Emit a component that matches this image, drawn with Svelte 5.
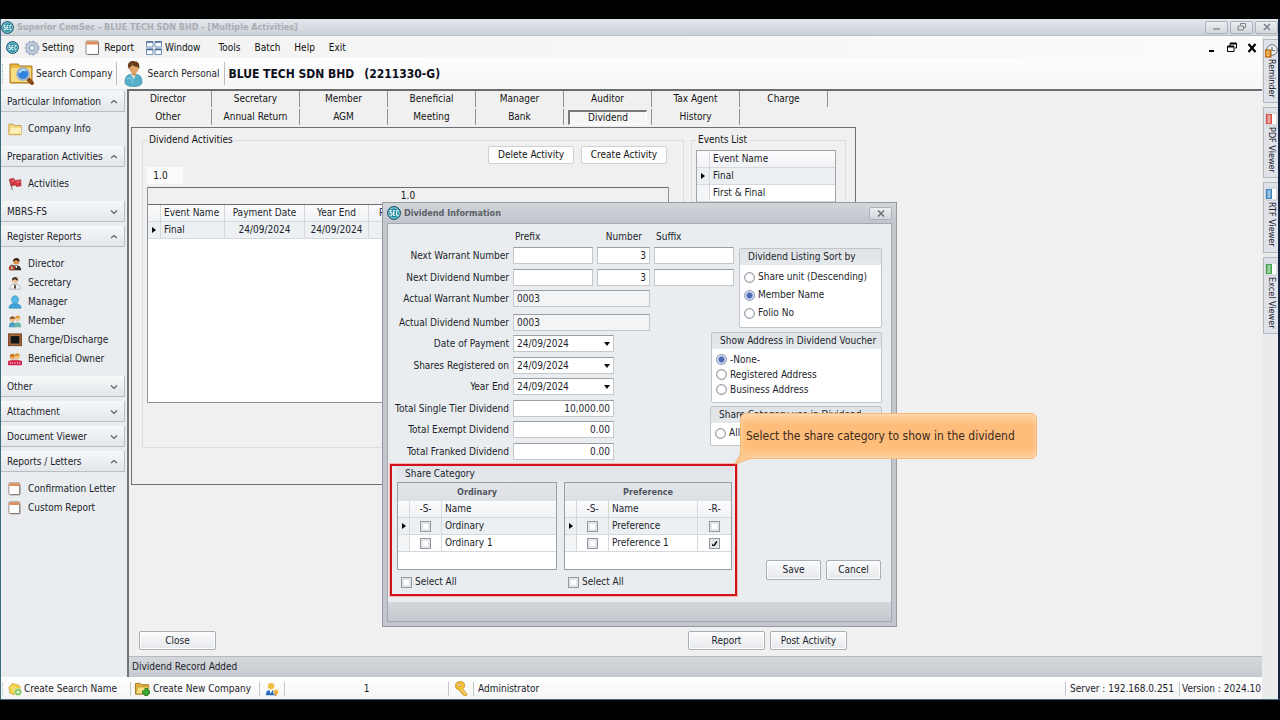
<script>
  const menus = ['Tools', 'Batch', 'Help', 'Exit'];

  const sections = [
    { title: 'Particular Infomation', open: true, items: [['Company Info', 'folder']] },
    { title: 'Preparation Activities', open: true, items: [['Activities', 'flag']] },
    { title: 'MBRS-FS', open: false, items: [] },
    {
      title: 'Register Reports',
      open: true,
      items: [
        ['Director', 'director'],
        ['Secretary', 'secretary'],
        ['Manager', 'manager'],
        ['Member', 'member'],
        ['Charge/Discharge', 'charge'],
        ['Beneficial Owner', 'owner']
      ]
    },
    { title: 'Other', open: false, items: [] },
    { title: 'Attachment', open: false, items: [] },
    { title: 'Document Viewer', open: false, items: [] },
    {
      title: 'Reports / Letters',
      open: true,
      items: [
        ['Confirmation Letter', 'report'],
        ['Custom Report', 'report']
      ]
    }
  ];

  const tabs = [
    ['Director', 'Secretary', 'Member', 'Beneficial', 'Manager', 'Auditor', 'Tax Agent', 'Charge'],
    ['Other', 'Annual Return', 'AGM', 'Meeting', 'Bank', 'Dividend', 'History']
  ];

  const rail = [
    ['Reminder', 'clock'],
    ['PDF Viewer', '#d9534a'],
    ['RTF Viewer', '#3f86c4'],
    ['Excel Viewer', '#45a84c']
  ];

  const dates = [
    ['Date of Payment', 'payment'],
    ['Shares Registered on', 'registered'],
    ['Year End', 'yearend']
  ];
  const totals = [
    ['Total Single Tier Dividend', '10,000.00', 'single'],
    ['Total Exempt Dividend', '0.00', 'exempt'],
    ['Total Franked Dividend', '0.00', 'franked']
  ];

  let sortBy = $state('Member Name');
  let address = $state('-None-');
  let restricted = $state([false, true]);
</script>

{#snippet logo(size)}
  <svg width={size} height={size} viewBox="0 0 14 14" aria-hidden="true">
    <circle cx="7" cy="7" r="6.4" fill="#1c8ca0" stroke="#174f66" />
    <circle cx="7" cy="7" r="5.2" fill="none" stroke="#bfe6ec" stroke-width=".8" />
    <path d="M5 4.6H3.4v2.2H5v2.4H3M8.3 4.6H6.4v4.8h1.9M6.4 7h1.6M11.2 4.8H9.6v4.5h1.6" fill="none" stroke="#fff" stroke-width="1" />
  </svg>
{/snippet}

{#snippet icon(name, size)}
  <svg width={size} height={size} viewBox="0 0 16 16" aria-hidden="true">
    {#if name === 'folder'}
      <path d="M1 2.500h5l1.500 1.500H15v10.500H1z" fill="#f3d680" stroke="#c79b3f" />
      <path d="M1.500 14 3.500 6.500h11.500v7.500z" fill="#fdf0b8" />
      <path d="M1.500 14h13" stroke="#d7a94a" />
    {:else if name === 'flag'}
      <path d="M2 3l3 12" stroke="#8b8f96" stroke-width="1.500" />
      <path d="M1.500 2.500l5-1L8 4l6.500-1 .5 7-5 1-2-2-4.500 1.500z" fill="#d33a42" stroke="#9b2730" stroke-width=".6" />
      <path d="M4 4.500l3-.5M10 6l3-.6" stroke="#f4a3a5" />
    {:else if name === 'director'}
      <path d="M4 15c0-4 2-5.500 5-5.500s6 1.500 6 5.500z" fill="#33302f" />
      <circle cx="9.500" cy="5" r="3.500" fill="#d8924c" />
      <path d="M5.500 5c-.2-4 6-5.500 7.500-2l.2 2c-2 0-3-1-4-1.500-1 1-2 1-3.700 1.500z" fill="#3a2317" />
      <path d="M8 10l1.500 3L11 10z" fill="#fff" />
      <rect x="1" y="10.500" width="7" height="4.500" rx="1" fill="#a8432a" /><path d="M3 10.500v-1h3v1" stroke="#6f2718" fill="none" />
      <circle cx="4.500" cy="12.700" r="1" fill="#fff" />
    {:else if name === 'secretary'}
      <path d="M2 15c0-4 2.500-5.500 6-5.500s6 1.500 6 5.500z" fill="#f5f6f8" stroke="#8e939b" stroke-width=".7" />
      <circle cx="8" cy="5" r="3.400" fill="#edc19b" />
      <path d="M4.500 5c-.4-5 7-5.500 7 0-2 0-3-.8-3.500-1.500C7 4.500 6 5 4.500 5z" fill="#4a3324" />
      <path d="M7.300 10h1.400l.6 3.500L8 15l-1.300-1.500z" fill="#55483f" />
    {:else if name === 'manager'}
      <path d="M1 15c0-3 2-4.600 5-5V8.500h4V10c3 .4 5 2 5 5z" fill="#3da2d6" stroke="#247aa8" stroke-width=".6" />
      <path d="M4 5c0-5.500 8-5.500 8 0 0 2.800-1.700 5.300-4 5.300S4 7.800 4 5z" fill="#55b8e6" stroke="#2b86b5" stroke-width=".6" />
    {:else if name === 'member'}
      <path d="M1 15c0-4 1.500-5.500 4-5.500S9 11 9 15z" fill="#4a9ec2" />
      <circle cx="5" cy="6" r="3" fill="#efc08b" /><path d="M2 6c0-4.500 6-4.500 6-.5-2 0-3-.7-6 .5z" fill="#8b5326" />
      <path d="M7 15c0-4 1.500-5.500 4-5.500s4 1.500 4 5.500z" fill="#69b6ab" />
      <circle cx="11" cy="5" r="3" fill="#f3ca93" /><path d="M8 5c0-4.500 6-4.500 6 0-2-1-3-1-6 0z" fill="#dd9b35" />
    {:else if name === 'charge'}
      <rect x=".5" y="1" width="15" height="13.500" fill="#a5673a" stroke="#6d4023" />
      <rect x="3" y="3.500" width="10" height="8.500" fill="#14181b" />
    {:else if name === 'owner'}
      <circle cx="5" cy="5.500" r="3" fill="#e7a860" /><path d="M2 5c0-4 6-4 6 0z" fill="#c4701f" />
      <circle cx="10.500" cy="5" r="3" fill="#f2c184" /><path d="M7.500 4.500c0-4 6-4 6 0z" fill="#e09a33" />
      <path d="M1 11c0-3 14-3 14 0z" fill="#d9574d" />
      <rect x="0" y="10" width="16" height="5" rx="1" fill="#d3214f" />
      <path d="M2.500 11.500v2M5 11.500v2M8 11.500v2M11 11.500v2M13.500 11.500v2" stroke="#ffd6e0" />
    {:else if name === 'report'}
      <rect x="1" y="1" width="12.500" height="13.500" rx="1.200" fill="#fdfdfd" stroke="#93857b" />
      <rect x="1.500" y="1.500" width="11.500" height="3" fill="#e08b57" />
      <path d="M13.500 4v10.500H3" stroke="#7b7069" fill="none" />
    {:else if name === 'gear'}
      <circle cx="8" cy="8" r="6" fill="#c3cee1" stroke="#96a4bd" stroke-width="1" />
      <circle cx="8" cy="8" r="6.800" fill="none" stroke="#a5b2c9" stroke-width="1.300" stroke-dasharray="2.500 1.500" />
      <circle cx="8" cy="8" r="2.700" fill="#f4f6fa" stroke="#8494b2" />
    {:else if name === 'windows'}
      <path d="M.5 1.500h6.500v5.500H.5zM9 1.500h6.500v5.500H9zM.5 9h6.500v5.500H.5zM9 9h6.500v5.500H9z" fill="#fafcff" stroke="#6d8fb8" />
      <path d="M.5 2h6.500M9 2h6.500M.5 9.500h6.500M9 9.500h6.500" stroke="#46699a" stroke-width="1.500" />
    {:else if name === 'searchname'}
      <path d="M1 6l4-4.500 3 1L13 4l1 3-1 5-6 2.500-5-2z" fill="#f2cf45" stroke="#c99b24" stroke-width=".7" />
      <path d="M3 7l4-3M4 9l5-3.500M5 11l4-3" stroke="#fff2a6" />
      <circle cx="11.500" cy="11.500" r="4" fill="#62bd3f" stroke="#d9f0cc" /><path d="M11.500 9.300v4.400M9.300 11.500h4.400" stroke="#fff" stroke-width="1.500" />
    {:else if name === 'newcompany'}
      <path d="M.5 2.500h5L7 4h7.500v10H.5z" fill="#e0ae3c" stroke="#a2761f" />
      <path d="M1 13.500 3 6.500h12l-1.500 7z" fill="#f8df84" stroke="#b98e2f" stroke-width=".6" />
      <path d="M10.500 8h3v2.500H16v3h-2.500V16h-3v-2.500H8v-3h2.500z" fill="#3faf34" stroke="#1d6f1b" stroke-width=".8" />
    {:else if name === 'user'}
      <path d="M1 15c0-4.500 2-6 5-6s6 1.500 6 6z" fill="#2a6dc0" />
      <path d="M5 9l1.500 4L8.500 9z" fill="#fff" />
      <circle cx="7" cy="4.700" r="3.700" fill="#f0bd45" />
      <circle cx="12.500" cy="11.500" r="2.800" fill="#f1a634" stroke="#fbe2a9" /><path d="M12.500 13v3" stroke="#d08a26" stroke-width="1.500" />
    {:else if name === 'key'}
      <path d="M1.500 5c0-6 10-6 10-.5 0 2-1 3-2 3.800l4.500 6-1 1.500h-2.500L10 14l-1.500-.2L8 12l-1.500-.5L6 9.500C3.500 9.500 1.500 8 1.500 5z" fill="#f3bf35" stroke="#b9831b" stroke-width=".7" />
      <circle cx="5.500" cy="4" r="1.500" fill="#fff7d0" stroke="#a97818" stroke-width=".6" />
      <path d="M8.500 8.500l3.500 5.500" stroke="#fce58a" />
    {/if}
  </svg>
{/snippet}

{#snippet gridTable(kind, title)}
  <table class="grid cat">
    <caption>{title}</caption>
    <thead>
      <tr>
        <th></th><th class="mid">-S-</th><th>Name</th>
        {#if kind === 'Preference'}<th class="mid">-R-</th>{/if}
      </tr>
    </thead>
    <tbody>
      {#each [kind, `${kind} 1`] as name, i}
        <tr class:current={i === 0}>
          <td class="mark">{#if i === 0}<i class="ptr"></i>{/if}</td>
          <td class="mid"><input type="checkbox" aria-label={name} /></td>
          <td>{name}</td>
          {#if kind === 'Preference'}
            <td class="mid"><input type="checkbox" aria-label={name} bind:checked={restricted[i]} /></td>
          {/if}
        </tr>
      {/each}
    </tbody>
  </table>
{/snippet}

<div class="screen">
  <div class="window">
    <header class="titlebar">
      {@render logo(13)}
      <h1>Superior ComSec - BLUE TECH SDN BHD - [Multiple Activities]</h1>
      <div class="wbtns">
        <button aria-label="Minimize"><svg width="10" height="8" viewBox="0 0 10 8"><path d="M1 6h7" stroke="#8a8f98" stroke-width="1.500" /></svg></button>
        <button aria-label="Restore"><svg width="10" height="8" viewBox="0 0 10 8"><path d="M3.500 2.500v-2h5v4h-2M1 3h5.500v4H1z" fill="none" stroke="#7d828b" /></svg></button>
        <button aria-label="Close window"><svg width="10" height="8" viewBox="0 0 10 8"><path d="M2 1l6 6M8 1L2 7" stroke="#7d828b" stroke-width="1.600" /></svg></button>
      </div>
    </header>

    <div class="frame">
      <div class="column">
        <nav class="menubar">
          {@render logo(13)}
          <button class="m1">{@render icon('gear', 16)}Setting</button>
          <button class="m2">{@render icon('report', 16)}Report</button>
          <button class="m3">{@render icon('windows', 16)}Window</button>
          {#each menus as m}<button>{m}</button>{/each}
          <div class="mdi">
            <button aria-label="Minimize document"><svg width="12" height="12" viewBox="0 0 12 12"><path d="M3 9h5" stroke="#000" stroke-width="2" /></svg></button>
            <button aria-label="Restore document"><svg width="12" height="12" viewBox="0 0 12 12"><path d="M4 4V1.500h6.500V6H9M1.500 4.500H8v5H1.500z" fill="none" stroke="#000" /><path d="M4 1.500h6.500M1.500 4.500H8" stroke="#000" stroke-width="2" /></svg></button>
            <button aria-label="Close document"><svg width="12" height="12" viewBox="0 0 12 12"><path d="M2.500 2l7 8M9.500 2l-7 8" stroke="#000" stroke-width="2.200" /></svg></button>
          </div>
        </nav>

        <div class="toolbar">
          <i class="grip"></i>
          <button class="company">
            <svg width="26" height="24" viewBox="0 0 26 24" aria-hidden="true">
              <path d="M1 2h8l2 2h12v17H1z" fill="#e9b640" stroke="#a97b25" />
              <path d="M2 6h20v14.500H2z" fill="#f9dd83" />
              <path d="M2 20.500h20" stroke="#b88629" />
              <path d="M18 16l5 5" stroke="#8b4c1a" stroke-width="4" stroke-linecap="round" />
              <circle cx="14" cy="12" r="6" fill="#2f83df" stroke="#a5b4c8" stroke-width="2" />
              <path d="M10.500 11c.5-3 4.500-4 6-2" stroke="#bfe2ff" stroke-width="1.600" fill="none" />
            </svg>
            Search Company
          </button>
          <i class="sep"></i>
          <button class="personal">
            <svg width="19" height="26" viewBox="0 0 19 26" aria-hidden="true">
              <path d="M1 21c0-6 3-8 8.500-8s8.500 2 8.500 8c0 3-3 4.500-8.500 4.500S1 24 1 21z" fill="#56aecb" stroke="#2f7f9c" stroke-width=".6" />
              <path d="M7 13l2.500 5 3-5z" fill="#f2f8fa" /><path d="M8.500 9h3.500v5l-2 1.500L7.500 13z" fill="#cf8f55" />
              <ellipse cx="10" cy="7" rx="4.600" ry="5.500" fill="#e0a56c" />
              <path d="M4 6C3 1 8-1 11 .5c4-.3 5 4 4 8l-1-2.500C11 6 9 5 8.500 3.500 8 5.500 6.500 6 5.500 6.500L5.500 9z" fill="#6b3c1b" />
              <path d="M3 18c3-2 5 0 6 4" stroke="#a2dbec" fill="none" />
            </svg>
            Search Personal
          </button>
          <i class="sep"></i>
          <h2><span>BLUE TECH SDN BHD</span><span>(2211330-G)</span></h2>
        </div>

        <div class="workspace">
          <aside class="sidebar">
            {#each sections as s}
              <section>
                <button class="shead" aria-expanded={s.open}>
                  {s.title}
                  <svg width="8" height="6" viewBox="0 0 8 6" aria-hidden="true">
                    <path d={s.open ? 'M1 4l3-2.500L7 4' : 'M1 1.500L4 4.500l3-3'} fill="none" stroke="#5b606a" stroke-width="1.200" />
                  </svg>
                </button>
                {#if s.items.length}
                  <ul>
                    {#each s.items as [label, ic]}
                      <li><a href="#top">{@render icon(ic, 14)}<span>{label}</span></a></li>
                    {/each}
                  </ul>
                {/if}
              </section>
            {/each}
          </aside>

          <main>
            <div class="tabs">
              {#each tabs as row}
                <div class="tabrow">
                  {#each row as t}
                    <button class:active={t === 'Dividend'}><span>{t}</span></button>
                  {/each}
                </div>
              {/each}
            </div>

            <div class="panel">
              <fieldset class="acts">
                <legend>Dividend Activities</legend>
                <div class="actions">
                  <button class="flat">Delete Activity</button>
                  <button class="flat">Create Activity</button>
                </div>
                <button class="subtab">1.0</button>
                <div class="tablebox">
                  <table class="grid divs">
                    <caption>1.0</caption>
                    <colgroup><col class="c-mark" /><col class="c-ev" /><col class="c-pay" /><col class="c-ye" /><col /></colgroup>
                    <thead>
                      <tr><th></th><th>Event Name</th><th class="mid">Payment Date</th><th class="mid">Year End</th><th class="last">P</th></tr>
                    </thead>
                    <tbody>
                      <tr class="current"><td class="mark"><i class="ptr"></i></td><td>Final</td><td class="mid">24/09/2024</td><td class="mid">24/09/2024</td><td></td></tr>
                    </tbody>
                  </table>
                </div>
              </fieldset>
              <fieldset class="events">
                <legend>Events List</legend>
                <table class="grid">
                  <colgroup><col class="c-mark" /><col /></colgroup>
                  <thead><tr><th></th><th>Event Name</th></tr></thead>
                  <tbody>
                    <tr class="current"><td class="mark"><i class="ptr"></i></td><td>Final</td></tr>
                    <tr><td></td><td>First &amp; Final</td></tr>
                    <tr><td></td><td></td></tr>
                  </tbody>
                </table>
              </fieldset>
            </div>

            <div class="mainfoot">
              <button class="btn wide">Close</button>
              <span class="fill"></span>
              <button class="btn wide">Report</button>
              <button class="btn wide">Post Activity</button>
            </div>
            <div class="strip">Dividend Record Added</div>

            <div class="dialog" role="dialog" aria-labelledby="dlg-title">
              <header class="dhead">
                {@render logo(14)}
                <h3 id="dlg-title">Dividend Information</h3>
                <button class="dclose" aria-label="Close dialog"><svg width="8" height="7" viewBox="0 0 8 7"><path d="M1 .5l6 6M7 .5l-6 6" stroke="#6c727c" stroke-width="1.600" /></svg></button>
              </header>
              <div class="dbody">
                <div class="left">
                  <form class="form">
                    <span></span><span class="colh">Prefix</span><span class="colh num">Number</span><span class="colh">Suffix</span>
                    <label for="nw">Next Warrant Number</label><input id="nw" /><input class="num" value="3" aria-label="Number" /><input aria-label="Suffix" />
                    <label for="nd">Next Dividend Number</label><input id="nd" /><input class="num" value="3" aria-label="Number" /><input aria-label="Suffix" />
                    <label for="aw">Actual Warrant Number</label><input id="aw" class="ro" value="0003" readonly />
                    <label for="ad">Actual Dividend Number</label><input id="ad" class="ro" value="0003" readonly />
                    {#each dates as [label, id]}
                      <label for={id}>{label}</label>
                      <span class="combo"><select {id}><option>24/09/2024</option></select><i></i></span>
                    {/each}
                    {#each totals as [label, value, id]}
                      <label for={id}>{label}</label><input {id} class="num total" {value} />
                    {/each}
                  </form>

                  <section class="share">
                    <h4>Share Category</h4>
                    <div class="cats">
                      <div class="ord">
                        {@render gridTable('Ordinary', 'Ordinary')}
                        <label class="all"><input type="checkbox" />Select All</label>
                      </div>
                      <div class="pref">
                        {@render gridTable('Preference', 'Preference')}
                        <label class="all"><input type="checkbox" />Select All</label>
                      </div>
                    </div>
                  </section>
                </div>

                <div class="right">
                  <section class="group sort">
                    <h4>Dividend Listing Sort by</h4>
                    <div class="opts">
                      {#each ['Share unit (Descending)', 'Member Name', 'Folio No'] as o}
                        <label><input type="radio" name="sort" value={o} bind:group={sortBy} />{o}</label>
                      {/each}
                    </div>
                  </section>
                  <section class="group addr">
                    <h4>Show Address in Dividend Voucher</h4>
                    <div class="opts">
                      {#each ['-None-', 'Registered Address', 'Business Address'] as o}
                        <label><input type="radio" name="addr" value={o} bind:group={address} />{o}</label>
                      {/each}
                    </div>
                  </section>
                  <section class="group usecat">
                    <h4>Share Category use in Dividend</h4>
                    <div class="opts"><label><input type="radio" name="use" />All</label></div>
                  </section>
                  <div class="dbtns">
                    <button class="btn">Save</button>
                    <button class="btn">Cancel</button>
                  </div>
                </div>
              </div>
              <footer class="dfoot"></footer>
              <div class="callout">
                <svg width="44" height="20" viewBox="0 0 44 20" aria-hidden="true">
                  <path d="M6 0v7L0 18l17-7z" fill="#fdc78e" /><path d="M6 7L0 18l17-6" fill="none" stroke="#f3b679" />
                </svg>
                <p>Select the share category to show in the dividend</p>
              </div>
            </div>
          </main>
        </div>

        <footer class="statusbar">
          <i class="grip"></i>
          <button class="s-name">{@render icon('searchname', 14)}Create Search Name</button>
          <button class="s-new">{@render icon('newcompany', 15)}Create New Company</button>
          <span class="s-icon">{@render icon('user', 14)}</span>
          <span class="s-count">1</span>
          <span class="s-icon">{@render icon('key', 15)}</span>
          <span class="s-user">Administrator</span>
          <span class="s-server">Server : 192.168.0.251</span>
          <span class="s-ver">Version : 2024.10</span>
        </footer>
      </div>

      <div class="rail">
        {#each rail as [label, tone], i}
          <button class:big={i === 3} class:small={i === 0}>
            {#if tone === 'clock'}
              <svg width="13" height="14" viewBox="0 0 13 14" aria-hidden="true"><circle cx="7" cy="6" r="5.300" fill="#eef0f3" stroke="#6f747c" /><path d="M7 3v3l3 1" stroke="#555" fill="none" /><rect x="0" y="6" width="6" height="7" fill="#e6912f" stroke="#a35e15" /><path d="M2 8h2M2 11h2" stroke="#fff1c4" /></svg>
            {:else}
              <svg width="13" height="14" viewBox="0 0 13 14" aria-hidden="true"><path d="M1 1h11v12H1z" fill="#fdfdfd" stroke="#c3c7cc" /><rect x="1" y="2" width="6" height="10" fill={tone} /><path d="M2.500 4h3M2.500 6h3M2.500 8h3M2.500 10h3" stroke="#fff" /></svg>
            {/if}
            {label}
          </button>
        {/each}
      </div>
    </div>
  </div>
</div>

<style>
  :global(body) {
    margin: 0;
    background: #000;
  }
  .screen,
  .screen :global(*) {
    box-sizing: border-box;
  }
  .screen {
    display: flex;
    min-height: 100vh;
    padding: 19px 0 20px;
    background: #000;
    color: #1c1e2c;
    font: 10px/16px 'DejaVu Sans Condensed', 'DejaVu Sans', sans-serif;
  }
  button,
  input,
  select {
    font: inherit;
    color: inherit;
    margin: 0;
  }
  button {
    padding: 0;
    border: 0;
    background: none;
    white-space: nowrap;
  }
  h1, h2, h3, h4, p, ul {
    margin: 0;
    padding: 0;
    font-size: inherit;
    font-weight: inherit;
  }
  svg {
    display: block;
    flex: none;
  }
  .window {
    flex: 1;
    display: flex;
    flex-direction: column;
    border: solid #3f6b80;
    border-width: 0 2px 1px 1px;
    border-right-color: #14243c;
    background: #f0f0f0;
  }
  .titlebar {
    display: flex;
    align-items: center;
    gap: 3px;
    height: 17px;
    background: linear-gradient(#e4e7eb, #cdd1d8);
    border-bottom: 1px solid #b9bec6;
  }
  .titlebar h1 {
    flex: 1;
    color: #a9adb4;
    font-size: 9px;
    font-weight: bold;
  }
  .wbtns {
    display: flex;
    gap: 2px;
  }
  .wbtns button,
  .dclose {
    display: grid;
    place-items: center;
    width: 23px;
    height: 13px;
    border: 1px solid #aeb3bb;
    border-radius: 2px;
    background: linear-gradient(#eceef1, #d3d7dc);
  }
  .frame {
    flex: 1;
    display: flex;
  }
  .column {
    flex: 1;
    min-width: 0;
    display: flex;
    flex-direction: column;
  }
  .menubar {
    display: flex;
    align-items: center;
    height: 22px;
    padding: 1px 0 0 5px;
    background: linear-gradient(90deg, #f2f2f2, #fbfbfb);
  }
  .menubar button {
    display: flex;
    align-items: center;
    gap: 2px;
    margin-right: 14px;
    color: #111;
  }
  .menubar .m1 {
    margin-left: 5px;
    margin-right: 11px;
  }
  .menubar .m2 {
    gap: 3px;
    margin-right: 12px;
  }
  .menubar .m3 {
    gap: 3px;
    margin-right: 18px;
  }
  .mdi {
    display: flex;
    gap: 8px;
    margin-left: auto;
    padding-right: 4px;
  }
  .menubar .mdi button {
    margin: 0;
  }
  .toolbar {
    display: flex;
    align-items: center;
    height: 31px;
    padding-left: 1px;
    background: linear-gradient(#fdfdfd, #f7f7f7);
  }
  .grip {
    width: 1px;
    height: 20px;
    border-left: 1px dotted #a8b5bf;
  }
  .toolbar button {
    display: flex;
    align-items: center;
    gap: 1px;
  }
  .toolbar .company {
    margin: 0 3px 0 6px;
  }
  .toolbar .personal {
    gap: 5px;
    margin: 0 4px 0 7px;
  }
  .sep {
    width: 1px;
    height: 23px;
    background: #b9bdc2;
  }
  .toolbar h2 {
    display: flex;
    gap: 10px;
    margin-left: 4px;
    color: #0c0e1c;
    font-size: 12px;
    font-weight: bold;
  }
  .workspace {
    flex: 1;
    display: flex;
  }
  .sidebar {
    width: 126px;
    padding: 2px 2px 0 0;
    background: #e9edef;
  }
  .sidebar section {
    margin-bottom: 4px;
  }
  .shead {
    display: flex;
    align-items: center;
    justify-content: space-between;
    width: 100%;
    height: 21px;
    padding: 2px 6px 0;
    border: 1px solid #b9bec5;
    border-width: 0 1px 1px 0;
    background: linear-gradient(#f6f8f9, #e3e6ea);
  }
  .sidebar ul {
    padding: 7px 0 4px;
    list-style: none;
  }
  .sidebar a {
    display: flex;
    align-items: center;
    gap: 6px;
    height: 19px;
    padding-left: 7px;
    color: inherit;
    text-decoration: none;
  }
  main {
    position: relative;
    flex: 1;
    min-width: 0;
    display: flex;
    flex-direction: column;
    border-left: 2px solid #707377;
    border-top: 2px solid #6a6d70;
    color: #141414;
    background: #f0f0f0;
  }
  .tabs {
    display: grid;
    gap: 2px;
  }
  .tabrow {
    display: flex;
    height: 16px;
  }
  .tabrow button {
    width: 88px;
    padding: 0 4px;
    border-right: 1px solid #8e9194;
    line-height: 14px;
  }
  .tabrow button:first-child {
    width: 83px;
    padding: 0 8px 0 4px;
  }
  .tabrow .active span {
    display: block;
    border: solid #77797c;
    border-width: 2px 1px 1px 2px;
    border-right-color: #fff;
    border-bottom-color: #fff;
    background: #f6f6f6;
    line-height: 12px;
  }
  .panel {
    display: flex;
    gap: 7px;
    max-width: 725px;
    height: 358px;
    margin: 2px 0 0 2px;
    padding: 4px 9px 36px 10px;
    border: 1px solid #6c6f72;
  }
  fieldset {
    min-width: 0;
    margin: 0;
    border: 1px solid #dcdddf;
  }
  legend {
    padding: 0 2px;
  }
  .acts {
    flex: 1;
    display: flex;
    flex-direction: column;
    padding: 0 14px 0 4px;
  }
  .actions {
    display: flex;
    justify-content: flex-end;
    gap: 7px;
    margin-top: -2px;
    padding-right: 2px;
  }
  .flat {
    width: 86px;
    height: 18px;
    border: 1px solid #cfd1d3;
    border-radius: 2px;
    background: #fdfdfd;
  }
  .subtab {
    align-self: flex-start;
    width: 36px;
    height: 17px;
    margin-top: 3px;
    padding-right: 9px;
    background: #fbfbfb;
  }
  .tablebox {
    height: 216px;
    margin-top: 3px;
    border: 1px solid #8f9296;
    border-top-color: #6a6d70;
    background: #fff;
  }
  .grid {
    width: 100%;
    border-collapse: separate;
    border-spacing: 0;
    table-layout: fixed;
    line-height: 16px;
  }
  .grid th,
  .grid td {
    height: 17px;
    padding: 0 3px;
    border: solid #d5d9de;
    border-width: 0 1px 1px 0;
    font-weight: normal;
    text-align: left;
    white-space: nowrap;
    overflow: hidden;
    color: #1c1e2c;
  }
  .grid th {
    background: linear-gradient(#fcfcfd, #f1f2f5);
  }
  .grid td:first-child {
    background: #f4f5f7;
  }
  .grid th:last-child,
  .grid td:last-child {
    border-right: 0;
  }
  .grid .mid {
    padding: 0;
    text-align: center;
  }
  .grid .current td {
    background: #edf0f2;
  }
  .grid .mark {
    padding: 0 4px;
  }
  .c-mark { width: 13px; }
  .c-ev { width: 64px; }
  .c-pay { width: 80px; }
  .c-ye { width: 64px; }
  .ptr {
    display: block;
    width: 0;
    border: 3px solid transparent;
    border-left: 4px solid #000;
    border-right: 0;
  }
  .divs .last {
    padding-left: 10px;
  }
  .divs caption {
    height: 17px;
    border-bottom: 1px solid #6a6d70;
    background: #f0f0f0;
    line-height: 16px;
  }
  .events {
    width: 155px;
    padding: 2px 9px 0 4px;
  }
  .events .grid {
    border: 1px solid #a2a6ab;
    background: #fff;
  }
  .mainfoot {
    display: flex;
    gap: 5px;
    max-width: 725px;
    margin: auto 0 6px;
    padding: 0 7px 0 10px;
  }
  .fill {
    flex: 1;
  }
  .btn {
    width: 55px;
    height: 20px;
    border: 1px solid #a9adb4;
    border-radius: 2px;
    background: linear-gradient(#fafbfc, #e6e8eb);
    box-shadow: inset 0 0 0 1px #fff;
    color: #1c1e2c;
  }
  .btn.wide {
    width: 77px;
    height: 19px;
  }
  .strip {
    height: 21px;
    padding-left: 3px;
    border-top: 1px solid #b5b8bd;
    background: linear-gradient(#d5d8dc, #c6c9ce);
    line-height: 19px;
    color: #1c1e2c;
  }

  .dialog {
    position: absolute;
    left: 253px;
    top: 111px;
    width: 515px;
    padding: 0 4px 4px;
    border: 1px solid #959aa2;
    background: #c3c7cd;
    color: #1c1e2c;
  }
  .dhead {
    display: flex;
    align-items: center;
    gap: 3px;
    height: 20px;
    margin: 0 -4px;
    padding: 0 4px;
    background: linear-gradient(#d2d5da, #c1c5cb);
  }
  .dhead h3 {
    flex: 1;
    color: #5b5f68;
    font-size: 9px;
    font-weight: bold;
  }
  .dbody {
    display: flex;
    justify-content: space-between;
    border: solid #a4a9b0;
    border-width: 1px 1px 0;
    padding: 5px 10px 6px 0;
    background: #e9edef;
  }
  .dfoot {
    height: 20px;
    border: solid #a4a9b0;
    border-width: 0 1px 1px;
    background: linear-gradient(#d3d6da, #c5c8cd);
  }
  .left {
    flex: none;
    width: 350px;
  }
  .form {
    display: grid;
    grid-template-columns: 121px 80px 53px 80px;
    grid-template-rows: 18px 22px 21px 24px 21px 22px 21px 22px 21px 22px 18px;
    column-gap: 4px;
    align-items: start;
  }
  .form label {
    grid-column: 1;
    justify-self: end;
    white-space: nowrap;
    line-height: 17px;
  }
  .colh {
    padding-left: 2px;
    line-height: 15px;
  }
  .colh.num {
    padding-right: 8px;
  }
  .num {
    text-align: right;
  }
  .form input,
  .combo select {
    width: 100%;
    min-width: 0;
    height: 17px;
    padding: 0 3px;
    border: 1px solid #c4c8cd;
    border-top-color: #9b9fa5;
    border-radius: 0;
    background: #fff;
    appearance: none;
  }
  .form .ro {
    grid-column: 2 / 4;
    background: #f3f4f5;
  }
  .form .total,
  .combo {
    grid-column: 2 / 4;
    width: 101px;
  }
  .combo {
    display: grid;
    align-items: center;
  }
  .combo > * {
    grid-area: 1 / 1;
  }
  .combo i {
    justify-self: end;
    margin-right: 4px;
    border: 3px solid transparent;
    border-top: 4px solid #111;
    border-bottom: 0;
    pointer-events: none;
  }
  .share {
    margin: 3px 0 0 2px;
    width: 347px;
    height: 132px;
    padding: 0 2px 0 4px;
    border: 2px solid #d0121c;
    outline: 1px solid #f7b4b0;
  }
  .share h4 {
    padding-left: 9px;
    line-height: 16px;
    background: linear-gradient(#dfe2e6, #e6e9ec);
  }
  .cats {
    display: flex;
    gap: 7px;
    padding-left: 1px;
  }
  .ord {
    width: 160px;
  }
  .pref {
    width: 168px;
  }
  .cats .grid {
    display: grid;
    grid-template-rows: 18px 17px auto;
    align-content: start;
    height: 88px;
    border: 1px solid #9a9fa6;
    background: #fff;
  }
  .cats .grid tr {
    display: grid;
    grid-template-columns: 12px 32px 1fr;
  }
  .cats .pref .grid tr {
    grid-template-columns: 12px 32px 1fr 33px;
  }
  .cats .grid .mid {
    display: grid;
    place-items: center;
  }
  .cats .grid .mark {
    display: grid;
    align-items: center;
  }
  .cat caption {
    display: block;
    background: linear-gradient(#e2e5e9, #dde0e4);
    color: #50545e;
    font-size: 9px;
    font-weight: bold;
    line-height: 18px;
    text-align: center;
  }
  input[type='checkbox'] {
    width: 11px;
    height: 11px;
    border: 1px solid #9297a0;
    background: #fff;
    box-shadow: inset 0 0 0 2px #e2e4e8;
    appearance: none;
  }
  input[type='checkbox']:checked {
    background: #e6e8eb url("data:image/svg+xml,%3Csvg xmlns='http://www.w3.org/2000/svg' viewBox='0 0 9 9'%3E%3Cpath d='M1 4.500L3.500 7.500 8.500 0' fill='none' stroke='%23101018' stroke-width='1.600'/%3E%3C/svg%3E") center / 9px no-repeat;
  }
  .all {
    display: flex;
    align-items: center;
    gap: 3px;
    padding: 4px 0 0 4px;
  }
  .right {
    display: flex;
    flex-direction: column;
    align-items: flex-end;
    margin-left: -28px;
    padding-top: 19px;
  }
  .group {
    border: 1px solid #c2c6cc;
    border-radius: 2px;
    background: linear-gradient(#dfe3e6, #e6e9ec 16px, #fff 16px);
  }
  .group h4 {
    overflow: hidden;
    margin-right: 3px;
    padding-left: 8px;
    white-space: nowrap;
    line-height: 16px;
  }
  .opts {
    display: grid;
    padding-left: 4px;
  }
  .opts label {
    display: flex;
    align-items: center;
    gap: 3px;
    white-space: nowrap;
  }
  .sort {
    width: 143px;
    height: 80px;
    margin-bottom: 4px;
  }
  .sort .opts {
    padding-top: 3px;
    grid-auto-rows: 18px;
  }
  .addr {
    width: 171px;
    height: 71px;
    margin-bottom: 3px;
  }
  .addr .opts {
    padding-top: 3px;
    grid-auto-rows: 15px;
  }
  .usecat {
    width: 172px;
    height: 40px;
  }
  .usecat .opts {
    padding-top: 2px;
  }
  input[type='radio'] {
    width: 11px;
    height: 11px;
    border: 1px solid #8e939c;
    border-radius: 50%;
    background: #fff;
    box-shadow: inset 0 0 0 1px #dfe2e6;
    appearance: none;
  }
  input[type='radio']:checked {
    border-color: #7f8fb5;
    background: radial-gradient(#4a68b4 0 2px, #7f98d4 3px, #eef2fa 4px);
  }
  .dbtns {
    display: flex;
    gap: 5px;
    margin: auto 1px 16px 0;
  }
  .callout {
    position: absolute;
    left: 357px;
    top: 210px;
    width: 297px;
  }
  .callout p {
    padding-left: 5px;
    border: 1px solid #f8b876;
    border-radius: 6px;
    background: linear-gradient(#fdd3a6, #ffbd7b 25%, #ffbd7b 75%, #fdca96);
    box-shadow: inset 0 0 4px #fde0bf;
    color: #3a2a1c;
    font-size: 12px;
    line-height: 44px;
    white-space: nowrap;
  }
  .callout svg {
    position: absolute;
    left: -5px;
    bottom: -7px;
  }
  .statusbar {
    display: flex;
    align-items: center;
    height: 22px;
    padding: 1px 0 0 1px;
    background: linear-gradient(#fff, #f5f5f5);
  }
  .statusbar .grip {
    height: 12px;
  }
  .statusbar span,
  .statusbar button {
    display: flex;
    align-items: center;
    height: 14px;
    white-space: nowrap;
  }
  .statusbar span {
    border-left: 1px solid #c3c6ca;
  }
  .s-name {
    gap: 2px;
    width: 127px;
    padding-left: 5px;
  }
  .statusbar .s-new {
    gap: 3px;
    width: 129px;
    padding-left: 4px;
    border-left: 1px solid #c3c6ca;
  }
  .s-icon {
    justify-content: center;
    width: 25px;
  }
  .s-count {
    justify-content: center;
    width: 164px;
  }
  .statusbar .s-user {
    flex: 1;
    padding-left: 4px;
  }
  .s-server {
    width: 114px;
    padding-left: 4px;
  }
  .s-ver {
    width: 83px;
    padding-left: 2px;
  }
  .rail {
    display: flex;
    flex-direction: column;
    gap: 4px;
    width: 16px;
    padding: 3px 0 0 1px;
    background: #e9ebed;
  }
  .rail button {
    display: flex;
    align-items: center;
    gap: 1px;
    width: 15px;
    height: 71px;
    padding: 4px 0;
    border: 1px solid #b4b8c0;
    border-right: 0;
    background: #dfe2e8;
    font-size: 9px;
    line-height: 13px;
    writing-mode: vertical-rl;
  }
  .rail .small {
    height: 64px;
  }
  .rail .big {
    height: 77px;
  }
</style>
